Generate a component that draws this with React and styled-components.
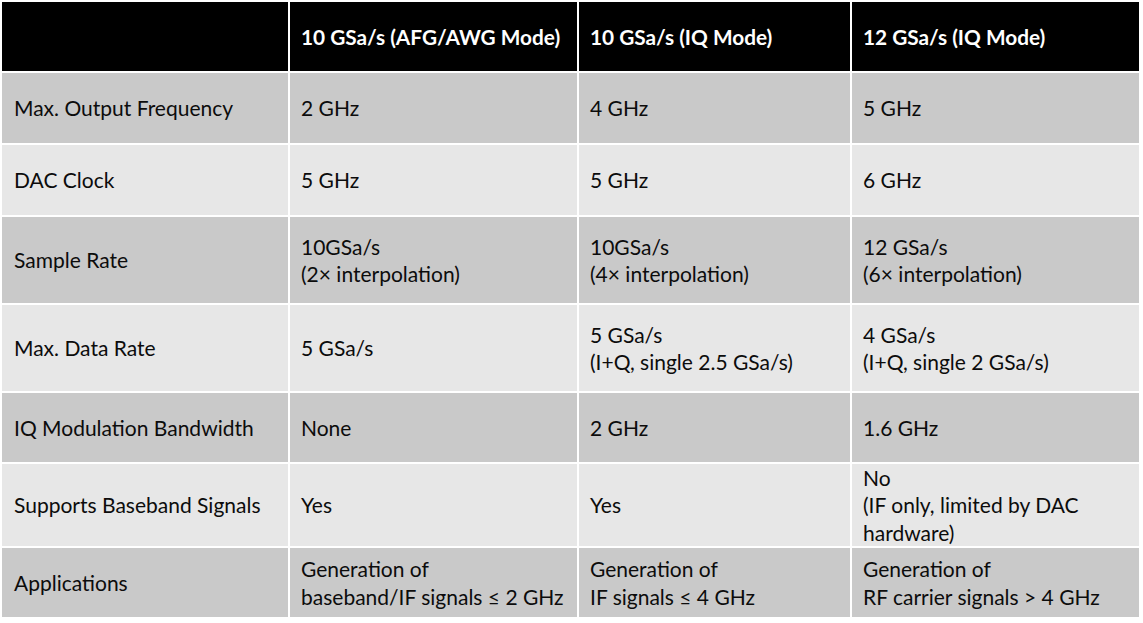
import React from "react";
import styled, { createGlobalStyle } from "styled-components";

const Global = createGlobalStyle`
  html, body { margin: 0; padding: 0; background: #ffffff; }
  body { font-family: Lato, "Open Sans", "Liberation Sans", sans-serif; }
`;

const Table = styled.div`
  display: grid;
  grid-template-columns: 286px 287px 271px 287px;
  grid-template-rows: 69px 70px 70px 86px 86px 69px 82px 69px;
  gap: 2px;
  padding: 2px 0 0 2px;
  width: 1137px;
  background: #ffffff;
`;

const HeadCell = styled.div`
  background: #000000;
  color: #ffffff;
  font-weight: 700;
  font-size: 20.8px;
  display: flex;
  align-items: center;
  padding: 0 11px;
  line-height: 28px;
`;

const Cell = styled.div`
  background: ${(p) => (p.$dark ? "#c9c9c9" : "#e7e7e7")};
  color: #0c0c0c;
  font-size: 21px;
  line-height: 27.5px;
  display: flex;
  flex-direction: column;
  justify-content: center;
  padding: 0 ${(p) => (p.$first ? "12px" : "11px")};
`;

const headers = ["", "10 GSa/s (AFG/AWG Mode)", "10 GSa/s (IQ Mode)", "12 GSa/s (IQ Mode)"];

const rows = [
  ["Max. Output Frequency", ["2 GHz"], ["4 GHz"], ["5 GHz"]],
  ["DAC Clock", ["5 GHz"], ["5 GHz"], ["6 GHz"]],
  ["Sample Rate", ["10GSa/s", "(2\u00d7 interpolation)"], ["10GSa/s", "(4\u00d7 interpolation)"], ["12 GSa/s", "(6\u00d7 interpolation)"]],
  ["Max. Data Rate", ["5 GSa/s"], ["5 GSa/s", "(I+Q, single 2.5 GSa/s)"], ["4 GSa/s", "(I+Q, single 2 GSa/s)"]],
  ["IQ Modulation Bandwidth", ["None"], ["2 GHz"], ["1.6 GHz"]],
  ["Supports Baseband Signals", ["Yes"], ["Yes"], ["No", "(IF only, limited by DAC", "hardware)"]],
  ["Applications", ["Generation of", "baseband/IF signals \u2264 2 GHz"], ["Generation of", "IF signals \u2264 4 GHz"], ["Generation of", "RF carrier signals > 4 GHz"]],
];

export default function App() {
  return (
    <>
      <Global />
      <Table>
        {headers.map((h, i) => (
          <HeadCell key={"h" + i}>{h}</HeadCell>
        ))}
        {rows.map((r, ri) => (
          <React.Fragment key={ri}>
            <Cell $dark={ri % 2 === 0} $first>
              <span>{r[0]}</span>
            </Cell>
            {r.slice(1).map((lines, ci) => (
              <Cell key={ci} $dark={ri % 2 === 0}>
                {lines.map((l, li) => (
                  <span key={li}>{l}</span>
                ))}
              </Cell>
            ))}
          </React.Fragment>
        ))}
      </Table>
    </>
  );
}
